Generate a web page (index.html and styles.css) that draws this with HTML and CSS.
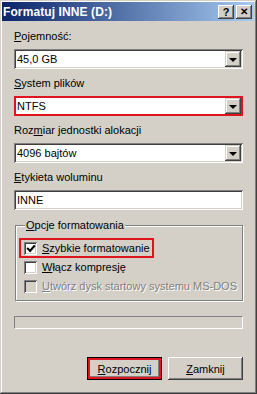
FILE: index.html
```html
<!DOCTYPE html>
<html lang="pl">
<head>
  <meta charset="UTF-8">
  <title>Formatuj INNE (D:)</title>
  <link rel="stylesheet" href="styles.css">
</head>
<body>
  <div class="window">
    <!-- Title bar -->
    <div class="titlebar">
      <span class="title">Formatuj INNE (D:)</span>
      <div class="title-buttons">
        <span class="tbtn">?</span>
        <span class="tbtn close">✕</span>
      </div>
    </div>

    <div class="content">
      <div class="field first">
        <div class="label"><u>P</u>ojemność:</div>
        <div class="combo">
          <span class="combo-text">45,0 GB</span>
          <span class="combo-arrow"></span>
        </div>
      </div>

      <div class="field">
        <div class="label"><u>S</u>ystem plików</div>
        <div class="combo marked">
          <span class="combo-text">NTFS</span>
          <span class="combo-arrow"></span>
        </div>
      </div>

      <div class="field">
        <div class="label">Roz<u>m</u>iar jednostki alokacji</div>
        <div class="combo">
          <span class="combo-text">4096 bajtów</span>
          <span class="combo-arrow"></span>
        </div>
      </div>

      <div class="field">
        <div class="label"><u>E</u>tykieta woluminu</div>
        <div class="textbox">INNE</div>
      </div>

      <!-- Format options -->
      <fieldset class="group">
        <legend><u>O</u>pcje formatowania</legend>
        <div class="check-row marked">
          <span class="checkbox checked"></span>
          <span><u>S</u>zybkie formatowanie</span>
        </div>
        <div class="check-row">
          <span class="checkbox"></span>
          <span><u>W</u>łącz kompresję</span>
        </div>
        <div class="check-row disabled">
          <span class="checkbox"></span>
          <span><u>U</u>twórz dysk startowy systemu MS-DOS</span>
        </div>
      </fieldset>

      <div class="progress"></div>

      <div class="buttons">
        <button class="btn default"><u>R</u>ozpocznij</button>
        <button class="btn"><u>Z</u>amknij</button>
      </div>
    </div>
  </div>
</body>
</html>
```

FILE: styles.css
```css
body {
  margin: 0;
  padding: 0;
  background-color: #d4d0c8;
  font-family: "Liberation Sans", Arial, sans-serif;
  font-size: 11px;
  color: #000000;
}

u {
  text-decoration: underline;
  text-underline-offset: 1px;
}

.window {
  width: 257px;
  height: 394px;
  box-sizing: border-box;
  padding: 2px 3px 3px 2px;
  background-color: #d4d0c8;
  box-shadow: inset -1px -1px 0 #404040, inset 1px 1px 0 #d4d0c8,
    inset -2px -2px 0 #808080, inset 2px 2px 0 #ffffff;
}

/* Title bar */
.titlebar {
  height: 19px;
  display: flex;
  align-items: center;
  justify-content: space-between;
  padding: 0 2px 0 1px;
  background: linear-gradient(to right, #0a246a, #a6caf0);
}

.title {
  color: #ffffff;
  font-weight: bold;
  font-size: 12px;
  letter-spacing: 0.1px;
}

.title-buttons {
  display: flex;
  gap: 2px;
}

.tbtn {
  width: 16px;
  height: 14px;
  box-sizing: border-box;
  display: flex;
  align-items: center;
  justify-content: center;
  background-color: #d4d0c8;
  font-weight: bold;
  font-size: 11px;
  box-shadow: inset -1px -1px 0 #404040, inset 1px 1px 0 #ffffff,
    inset -2px -2px 0 #808080;
}

.tbtn.close {
  font-size: 10px;
}

.content {
  padding: 0 11px 0 12px;
}

/* Fields */
.field {
  margin-top: 8px;
}

.field.first {
  margin-top: 9px;
}

.label {
  height: 13px;
  line-height: 13px;
  margin-bottom: 6px;
}

.combo,
.textbox {
  height: 20px;
  box-sizing: border-box;
  display: flex;
  align-items: center;
  background-color: #ffffff;
  padding: 2px;
  box-shadow: inset 1px 1px 0 #808080, inset -1px -1px 0 #ffffff,
    inset 2px 2px 0 #404040, inset -2px -2px 0 #d4d0c8;
}

.combo.marked {
  box-shadow: inset 0 0 0 2px #e0141e, inset 0 0 0 3px #ffffff;
}

.combo-text {
  flex: 1;
  padding-left: 1px;
}

.textbox {
  padding-left: 3px;
}

.combo-arrow {
  width: 16px;
  height: 16px;
  box-sizing: border-box;
  background-color: #d4d0c8;
  display: flex;
  align-items: center;
  justify-content: center;
  box-shadow: inset -1px -1px 0 #404040, inset 1px 1px 0 #d4d0c8,
    inset -2px -2px 0 #808080, inset 2px 2px 0 #ffffff;
}

.combo-arrow::after {
  content: "";
  border-left: 4px solid transparent;
  border-right: 4px solid transparent;
  border-top: 4px solid #000000;
  margin-top: 1px;
}

/* Group box */
.group {
  margin: 9px 0 0 1px;
  padding: 8px 0 0 5px;
  height: 82px;
  box-sizing: border-box;
  border: 1px solid #808080;
  box-shadow: inset 1px 1px 0 #ffffff, 1px 1px 0 #ffffff;
}

.group legend {
  padding: 0 1px;
  margin-left: 4px;
  line-height: 13px;
  background-color: #d4d0c8;
}

.check-row {
  display: flex;
  align-items: center;
  gap: 5px;
  height: 16px;
  width: max-content;
  padding: 0 2px 0 3px;
  margin-bottom: 3px;
  box-sizing: border-box;
}

.check-row.marked {
  box-shadow: 0 0 0 2px #e0141e;
}

.checkbox {
  width: 13px;
  height: 13px;
  box-sizing: border-box;
  background-color: #ffffff;
  display: flex;
  align-items: center;
  justify-content: center;
  box-shadow: inset 1px 1px 0 #808080, inset -1px -1px 0 #ffffff,
    inset 2px 2px 0 #404040, inset -2px -2px 0 #d4d0c8;
}

.checkbox.checked::after {
  content: "";
  width: 6px;
  height: 3px;
  border-left: 2px solid #000000;
  border-bottom: 2px solid #000000;
  transform: translate(0, -1px) rotate(-48deg);
}

.check-row.disabled {
  color: #808080;
  text-shadow: 1px 1px 0 #ffffff;
}

.check-row.disabled .checkbox {
  background-color: #d4d0c8;
}

/* Progress bar */
.progress {
  margin: 15px 0 0 0;
  height: 13px;
  box-sizing: border-box;
  border-top: 1px solid #808080;
  border-left: 1px solid #808080;
  border-bottom: 1px solid #ffffff;
  border-right: 1px solid #ffffff;
}

/* Buttons */
.buttons {
  display: flex;
  justify-content: flex-end;
  gap: 6px;
  margin-top: 28px;
}

.btn {
  width: 75px;
  height: 23px;
  padding: 0;
  margin: 0;
  border: none;
  background-color: #d4d0c8;
  font-family: "Liberation Sans", Arial, sans-serif;
  font-size: 11px;
  color: #000000;
  box-shadow: inset -1px -1px 0 #404040, inset 1px 1px 0 #ffffff,
    inset -2px -2px 0 #808080, inset 2px 2px 0 #d4d0c8;
}

.btn.default {
  box-shadow: inset 0 0 0 1px #000000, inset 0 0 0 3px #e0141e,
    inset -4px -4px 0 #808080;
}
```
